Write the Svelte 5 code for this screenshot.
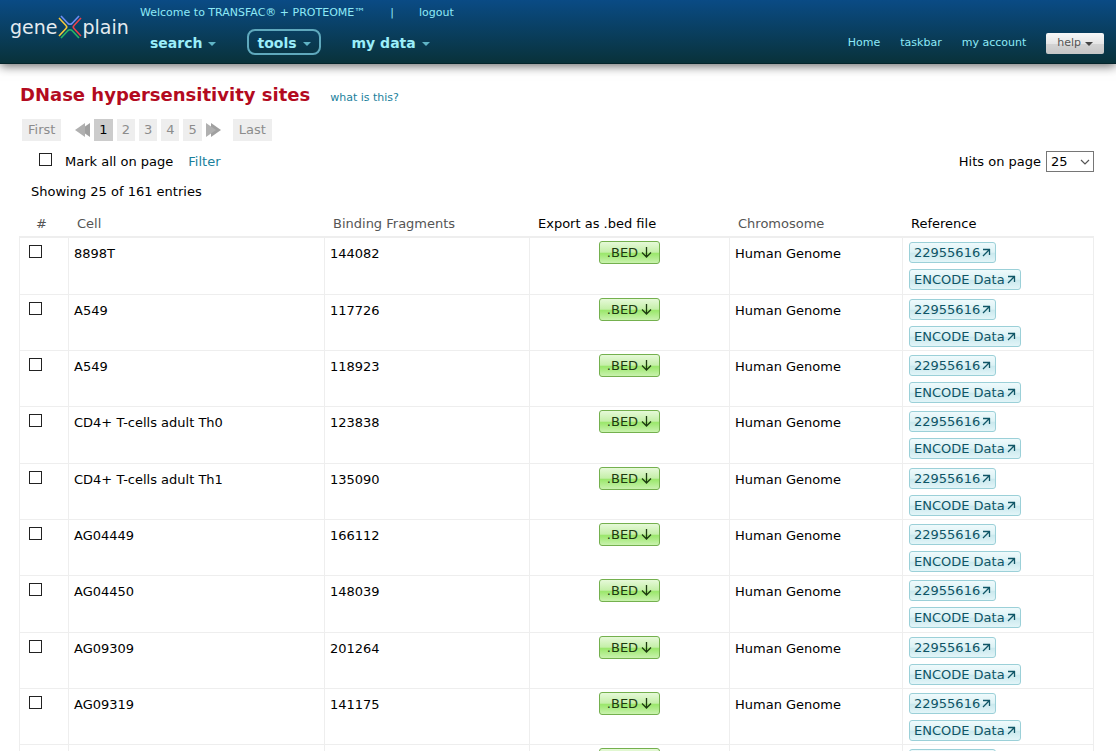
<script>
  const links = ['Home', 'taskbar', 'my account'];
  const menus = ['search', 'tools', 'my data'];
  const activeMenu = 'tools';
  const pages = [1, 2, 3, 4, 5];
  const total = 161;

  let page = $state(1);
  let perPage = $state(25);
  let rows = $state([
    { cell: '8898T', fragments: 144082, marked: false },
    { cell: 'A549', fragments: 117726, marked: false },
    { cell: 'A549', fragments: 118923, marked: false },
    { cell: 'CD4+ T-cells adult Th0', fragments: 123838, marked: false },
    { cell: 'CD4+ T-cells adult Th1', fragments: 135090, marked: false },
    { cell: 'AG04449', fragments: 166112, marked: false },
    { cell: 'AG04450', fragments: 148039, marked: false },
    { cell: 'AG09309', fragments: 201264, marked: false },
    { cell: 'AG09319', fragments: 141175, marked: false },
    { cell: 'AG10803', fragments: 152310, marked: false }
  ]);

  function markAll(e) {
    for (const row of rows) row.marked = e.target.checked;
  }

  function sortBy(key) {
    rows.sort((a, b) => (a[key] > b[key] ? 1 : a[key] < b[key] ? -1 : 0));
  }
</script>

{#snippet refLink(label)}
  <a class="ref" href="#ref">
    {label}
    <svg width="9" height="9" viewBox="0 0 9 9" aria-hidden="true">
      <path d="M1 1.500h7M7.500 1v6M7.500 1.500L1 8" fill="none" stroke="currentColor" stroke-width="1.3" />
    </svg>
  </a>
{/snippet}

<header>
  <a class="logo" href="#home" aria-label="geneXplain">
    <span>gene</span>
    <svg width="24" height="24" viewBox="0 0 24 24" fill="none" stroke-width="1.6" aria-hidden="true">
      <path d="M3 1L10 8.500Q12 10 14 8.500L21 1" stroke="#6f8df5" />
      <path d="M3 23L10 15.500Q12 14 14 15.500L21 23" stroke="#27b565" />
      <path d="M1 3L8 10.500Q9.500 12 8 13.500L1 21" stroke="#f5c83c" />
      <path d="M23 3L16 10.500Q14.500 12 16 13.500L23 21" stroke="#ee4048" />
    </svg>
    <span>plain</span>
  </a>
  <div class="main-nav">
    <div class="welcome">
      <span>Welcome to TRANSFAC® + PROTEOME™</span>
      <span>|</span>
      <a href="#logout">logout</a>
    </div>
    <nav>
      {#each menus as menu}
        <button class="menu" class:active={menu === activeMenu}>{menu}<i class="caret"></i></button>
      {/each}
    </nav>
  </div>
  <div class="user-nav">
    {#each links as link}
      <a href="#{link}">{link}</a>
    {/each}
    <button class="help">help<i class="caret"></i></button>
  </div>
</header>

<main>
  <div class="title">
    <h1>DNase hypersensitivity sites</h1>
    <a href="#about">what is this?</a>
  </div>

  <div class="pager">
    <button class="page edge" onclick={() => (page = 1)}>First</button>
    <button class="step prev" aria-label="Previous page" onclick={() => (page = Math.max(1, page - 1))}>
      <svg width="15" height="14" viewBox="0 0 15 14" aria-hidden="true">
        <path d="M15 0v14L5 7z" fill="#a0a0a0" />
        <path d="M10 0v14L0 7z" fill="#b0b0b0" />
      </svg>
    </button>
    {#each pages as n}
      <button class="page" class:current={n === page} onclick={() => (page = n)}>{n}</button>
    {/each}
    <button class="step next" aria-label="Next page" onclick={() => (page = Math.min(5, page + 1))}>
      <svg width="15" height="14" viewBox="0 0 15 14" aria-hidden="true">
        <path d="M5 0v14l10-7z" fill="#a0a0a0" />
        <path d="M0 0v14l10-7z" fill="#b0b0b0" />
      </svg>
    </button>
    <button class="page edge" onclick={() => (page = 5)}>Last</button>
  </div>

  <div class="options">
    <input id="mark-all" type="checkbox" onchange={markAll} />
    <label for="mark-all">Mark all on page</label>
    <a href="#filter">Filter</a>
    <label class="hits" for="hits">Hits on page</label>
    <div class="select">
      <select id="hits" bind:value={perPage}>
        <option value={10}>10</option>
        <option value={25}>25</option>
        <option value={50}>50</option>
      </select>
      <svg width="10" height="6" viewBox="0 0 10 6" aria-hidden="true">
        <path d="M1 1l4 4 4-4" fill="none" stroke="#555" stroke-width="1.2" />
      </svg>
    </div>
  </div>

  <p class="count">Showing {perPage} of {total} entries</p>

  <table>
    <colgroup>
      <col class="c-mark" />
      <col class="c-cell" />
      <col class="c-fragments" />
      <col class="c-export" />
      <col class="c-chromosome" />
      <col class="c-reference" />
    </colgroup>
    <thead>
      <tr>
        <th class="num">#</th>
        <th><button onclick={() => sortBy('cell')}>Cell</button></th>
        <th><button onclick={() => sortBy('fragments')}>Binding Fragments</button></th>
        <th>Export as .bed file</th>
        <th><button>Chromosome</button></th>
        <th>Reference</th>
      </tr>
    </thead>
    <tbody>
      {#each rows as row}
        <tr>
          <td class="mark"><input type="checkbox" aria-label="Mark {row.cell}" bind:checked={row.marked} /></td>
          <td>{row.cell}</td>
          <td>{row.fragments}</td>
          <td class="export">
            <button class="bed">
              .BED
              <svg width="11" height="11" viewBox="0 0 11 11" aria-hidden="true">
                <path d="M5.500 0v10M1 5.500l4.500 4.500L10 5.500" fill="none" stroke="currentColor" stroke-width="1.3" />
              </svg>
            </button>
          </td>
          <td>Human Genome</td>
          <td class="refs">
            {@render refLink('22955616')}
            {@render refLink('ENCODE Data')}
          </td>
        </tr>
      {/each}
    </tbody>
  </table>
</main>

<style>
  :global(body) {
    margin: 0;
    background: #fff;
    color: #000;
    font: 13px/20px Verdana, "DejaVu Sans", sans-serif;
  }
  button {
    font: inherit;
    cursor: pointer;
  }
  a {
    color: #1a7f9c;
    text-decoration: none;
  }
  header {
    display: flex;
    height: 64px;
    box-sizing: border-box;
    padding: 0 12px 0 10px;
    border-bottom: 1px solid #04242a;
    background: linear-gradient(#0a4b85, #09323a);
    box-shadow: 0 2px 10px rgba(0, 0, 0, 0.6);
    color: #8eeaf7;
    font-size: 11px;
  }
  header a {
    color: inherit;
  }
  .logo {
    display: flex;
    align-items: center;
    width: 130px;
    height: 54px;
    color: #e4ebf0;
    font-size: 19px;
  }
  .logo svg {
    margin-left: 1px;
  }
  .welcome {
    display: flex;
    gap: 25px;
    padding-top: 3px;
  }
  nav {
    display: flex;
    gap: 21px;
    padding-top: 6px;
  }
  .menu {
    display: flex;
    align-items: center;
    height: 26px;
    padding: 1px 8px 0;
    border: 2px solid transparent;
    border-radius: 8px;
    background: none;
    color: #9beefa;
    font-size: 14px;
    font-weight: bold;
  }
  .menu.active {
    border-color: #5fa9bd;
  }
  .caret {
    margin: 2px 0 0 6px;
    border: 4px solid transparent;
    border-top-color: #5fb4c6;
    border-bottom: 0;
  }
  .user-nav {
    display: flex;
    align-items: center;
    gap: 20px;
    height: 22px;
    margin: 32px 0 0 auto;
  }
  .help {
    display: flex;
    align-items: center;
    height: 21px;
    padding: 0 11px;
    border: 0;
    border-radius: 2px;
    background: linear-gradient(#f8f8f8, #e6e6e6 50%, #d4d4d4 50%, #c6c6c6);
    color: #555;
  }
  .help .caret {
    margin-left: 4px;
    border-top-color: #444;
  }
  main {
    padding: 21px 22px 20px 19px;
  }
  .title {
    display: flex;
    align-items: baseline;
    gap: 20px;
    padding-left: 1px;
  }
  h1 {
    margin: 0;
    color: #b30a20;
    font-size: 18px;
    line-height: 20px;
  }
  .title a {
    font-size: 11px;
  }
  .pager {
    display: flex;
    align-items: center;
    gap: 4px;
    padding: 11px 3px 0;
  }
  .page {
    height: 22px;
    padding: 0 5px;
    border: 0;
    background: #eee;
    color: #8c8c8c;
  }
  .page.edge {
    padding: 0 6px;
  }
  .page.current {
    background: #ccc;
    color: #000;
  }
  .step {
    display: flex;
    padding: 0;
    border: 0;
    background: none;
  }
  .prev {
    margin-left: 10px;
  }
  .next {
    margin-right: 8px;
  }
  .options {
    display: flex;
    align-items: center;
    padding: 10px 0 0 20px;
  }
  .options a {
    margin-left: 15px;
  }
  .hits {
    margin: 0 5px 0 auto;
  }
  input {
    appearance: none;
    width: 13px;
    height: 13px;
    margin: 0;
    border: 1px solid #222;
    background: #fff;
  }
  input:checked {
    background: #1a7f9c;
  }
  #mark-all {
    margin: 0 13px 4px 0;
  }
  .select {
    display: grid;
    align-items: center;
  }
  .select > * {
    grid-area: 1 / 1;
  }
  .select svg {
    justify-self: end;
    margin-right: 4px;
    pointer-events: none;
  }
  select {
    appearance: none;
    width: 48px;
    height: 21px;
    padding: 0 4px;
    border: 1px solid #767676;
    border-radius: 0;
    background: #fff;
    color: #000;
    font: inherit;
  }
  .count {
    margin: 0;
    padding: 10px 12px 12px;
  }
  table {
    width: 100%;
    table-layout: fixed;
    border-collapse: separate;
    border-spacing: 0;
  }
  .c-mark { width: 49px; }
  .c-cell { width: 256px; }
  .c-fragments { width: 205px; }
  .c-export { width: 200px; }
  .c-chromosome { width: 173px; }
  .c-reference { width: 192px; }
  th {
    padding: 0 9px 2px;
    border-bottom: 2px solid #eee;
    font-weight: normal;
    text-align: left;
  }
  th button {
    padding: 0;
    border: 0;
    background: none;
    color: #555;
  }
  th.num {
    padding-left: 17px;
    color: #555;
  }
  td {
    height: 56px;
    box-sizing: border-box;
    padding: 6px 5px 0;
    border-bottom: 1px solid #eee;
    border-left: 1px solid #eee;
    vertical-align: top;
  }
  td:last-child {
    border-right: 1px solid #eee;
  }
  tr:nth-child(3n + 1) td {
    height: 57px;
  }
  td.mark {
    padding: 7px 9px 0;
    line-height: 0;
  }
  td.export {
    padding-top: 3px;
    text-align: center;
  }
  .bed {
    display: inline-flex;
    align-items: center;
    gap: 3px;
    height: 23px;
    padding: 0 7px;
    border: 1px solid #74b04e;
    border-radius: 3px;
    background: linear-gradient(#e6f9d8, #c5efa9 48%, #9be76c 55%, #c9f2ae);
    color: #1d3a10;
  }
  td.refs {
    padding: 4px 6px 0;
  }
  .ref {
    display: flex;
    align-items: center;
    gap: 2px;
    width: max-content;
    height: 19px;
    margin-bottom: 6px;
    padding: 0 4px;
    border: 1px solid #9bd0d8;
    border-radius: 3px;
    background: linear-gradient(#effafc, #dcf2f5 48%, #cbe9ee 55%, #e2f5f8);
    color: #0f5566;
  }
  .ref:last-child {
    margin-bottom: 0;
  }
</style>
